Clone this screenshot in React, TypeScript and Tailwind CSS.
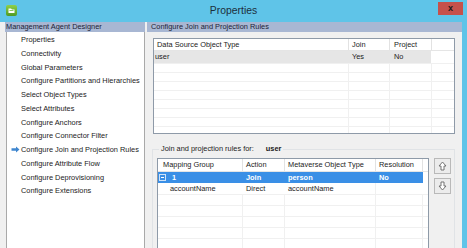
import React from "react";

const LEFT_ITEMS = [
  "Properties",
  "Connectivity",
  "Global Parameters",
  "Configure Partitions and Hierarchies",
  "Select Object Types",
  "Select Attributes",
  "Configure Anchors",
  "Configure Connector Filter",
  "Configure Join and Projection Rules",
  "Configure Attribute Flow",
  "Configure Deprovisioning",
  "Configure Extensions",
];

const ACTIVE = "Configure Join and Projection Rules";

function AppIcon() {
  return (
    <svg width="11" height="11" viewBox="0 0 11 11">
      <defs>
        <linearGradient id="g" x1="0" y1="0" x2="0" y2="1">
          <stop offset="0" stopColor="#8fd04a" />
          <stop offset="1" stopColor="#4f9a22" />
        </linearGradient>
      </defs>
      <rect x="0" y="0" width="11" height="11" rx="2" fill="url(#g)" />
      <path d="M2.5 3.5h2.5l1 1h2.5v3.5h-6z" fill="#fff" />
      <path d="M3.5 5.5h4" stroke="#6fb83a" strokeWidth="0.8" />
    </svg>
  );
}

function Arrow({ down }: { down?: boolean }) {
  return (
    <svg width="9" height="10" viewBox="0 0 9 10" className={down ? "rotate-180" : ""}>
      <path d="M4.5 1 L8 5 H6 V9 H3 V5 H1 Z" fill="#fff" stroke="#666" strokeWidth="0.9" strokeLinejoin="round" />
    </svg>
  );
}

function TopGrid() {
  const emptyRows = Array.from({ length: 8 });
  return (
    <div className="ml-[1px] flex h-[96px] w-[302px] flex-col overflow-hidden border border-[#8e9aa8] bg-white">
      <div className="flex h-[12px] shrink-0 items-center border-b border-[#e5e5e5]">
        <div className="w-[194px] pl-[3px]">Data Source Object Type</div>
        <div className="h-full w-[41px] border-l border-[#e2e2e2] pl-[3px] leading-[11px]">Join</div>
        <div className="h-full w-[42px] border-l border-[#e2e2e2] pl-[4px] leading-[11px]">Project</div>
        <div className="h-full flex-1 border-l border-[#e2e2e2]" />
      </div>
      <div className="flex h-[12px] shrink-0 items-center">
        <div className="flex h-full w-[277px] items-center bg-[#e6e6e6]">
          <div className="w-[194px] pl-[1px]">user</div>
          <div className="w-[41px] pl-[4px]">Yes</div>
          <div className="w-[42px] pl-[5px]">No</div>
        </div>
      </div>
      {emptyRows.map((_, i) => (
        <div key={i} className="flex h-[9px] shrink-0 border-t border-[#f0f0f0]">
          <div className="w-[194px]" />
          <div className="w-[41px] border-l border-[#f0f0f0]" />
          <div className="w-[42px] border-l border-[#f0f0f0]" />
          <div className="flex-1 border-l border-[#f0f0f0]" />
        </div>
      ))}
    </div>
  );
}

function BottomGrid() {
  const emptyRows = Array.from({ length: 7 });
  return (
    <div className="flex h-[115px] w-[272px] flex-col overflow-hidden border border-[#8e9aa8] bg-white">
      <div className="flex h-[13px] shrink-0 items-stretch border-b border-[#e5e5e5] leading-[12px]">
        <div className="w-[84px] pl-[5px]">Mapping Group</div>
        <div className="w-[42px] border-l border-[#e2e2e2] pl-[3px]">Action</div>
        <div className="w-[91px] border-l border-[#e2e2e2] pl-[3px]">Metaverse Object Type</div>
        <div className="w-[48px] border-l border-[#e2e2e2] border-r pl-[3px]">Resolution</div>
        <div className="flex-1" />
      </div>
      <div className="flex h-[11px] shrink-0">
        <div className="flex h-full w-[265px] items-center bg-[#3a8fe6] font-bold text-white">
          <div className="flex w-[84px] items-center pl-[1px]">
            <span className="flex h-[7px] w-[7px] items-center justify-center border border-[#cfe3f8]">
              <span className="h-[1px] w-[3px] bg-white" />
            </span>
            <span className="ml-[6px]">1</span>
          </div>
          <div className="w-[42px] pl-[4px]">Join</div>
          <div className="w-[91px] pl-[4px]">person</div>
          <div className="w-[48px] pl-[4px]">No</div>
        </div>
      </div>
      <div className="flex h-[11px] shrink-0 items-center">
        <div className="w-[84px] pl-[12px]">accountName</div>
        <div className="w-[42px] pl-[4px]">Direct</div>
        <div className="w-[91px] pl-[4px]">accountName</div>
        <div className="h-full w-[48px] border-l border-[#f0f0f0]" />
      </div>
      {emptyRows.map((_, i) => (
        <div key={i} className="flex h-[11px] shrink-0 border-t border-[#f0f0f0]">
          <div className="w-[84px]" />
          <div className="w-[42px] border-l border-[#f0f0f0]" />
          <div className="w-[91px] border-l border-[#f0f0f0]" />
          <div className="w-[48px] border-l border-[#f0f0f0] border-r" />
        </div>
      ))}
    </div>
  );
}

export default function App() {
  return (
    <div className="flex h-[248px] w-[467px] flex-col overflow-hidden bg-[#5fc4e8] font-['Liberation_Sans',Arial,sans-serif] text-[7.4px] leading-none text-[#1b1b1b]">
      {/* title bar */}
      <div className="grid h-[22px] shrink-0 grid-cols-[1fr_auto_1fr] items-start">
        <div className="pl-[6px] pt-[5px]">
          <AppIcon />
        </div>
        <div className="pt-[6px] text-[10.4px] text-[#1c2f3c]">Properties</div>
        <div className="flex justify-end pr-[4px] pt-[2px]">
          <div className="flex h-[13px] w-[25px] items-center justify-center bg-[#c6514b] text-[9px] font-bold text-[#1a1a1a]">
            x
          </div>
        </div>
      </div>

      {/* body */}
      <div className="flex min-h-0 flex-1 pr-[5px]">
        <div className="flex flex-1 bg-[#f0f0f0] pl-[5px]">
          {/* left: steps */}
          <div className="flex w-[140px] flex-col">
            <div className="flex h-[10px] shrink-0 items-center bg-[#a8b7d3] pl-[1px] text-[#1c2236]">
              Management Agent Designer
            </div>
            <div className="ml-[1px] flex-1 border-x border-[#a9a9a9] bg-white pt-[1px]">
              {LEFT_ITEMS.map((item) => (
                <div key={item} className="flex h-[13.75px] items-center">
                  <span className="flex w-[14px] justify-center pl-[2px]">
                    {item === ACTIVE && (
                      <svg width="9" height="7" viewBox="0 0 9 7">
                        <path d="M0.5 2.3h4.5V0.5L8.5 3.5 5 6.5V4.7H0.5z" fill="#3f86cf" />
                      </svg>
                    )}
                  </span>
                  <span>{item}</span>
                </div>
              ))}
            </div>
          </div>

          {/* right: join rules */}
          <div className="ml-[2px] flex min-h-0 flex-1 flex-col overflow-hidden">
            <div className="flex h-[10px] shrink-0 items-center bg-[#a8b7d3] pl-[4px] text-[#1c2236]">
              Configure Join and Projection Rules
            </div>
            <div className="flex-1 pl-[5px] pt-[6px]">
              <TopGrid />
              <fieldset className="mt-[11px] h-[140px] w-[303px] border border-[#e0e3e6] pl-[4px]">
                <legend className="ml-[2px] h-[8px] px-[2px] leading-[8px]">
                  Join and projection rules for:
                  <span className="ml-[12px] font-bold">user</span>
                </legend>
                <div className="flex pt-[5px]">
                  <BottomGrid />
                  <div className="ml-[5px] flex flex-col gap-[4px]">
                    <button className="flex h-[16px] w-[17px] items-center justify-center border border-[#b9b9b9] bg-[#ececec]">
                      <Arrow />
                    </button>
                    <button className="flex h-[16px] w-[17px] items-center justify-center border border-[#b9b9b9] bg-[#ececec]">
                      <Arrow down />
                    </button>
                  </div>
                </div>
              </fieldset>
            </div>
          </div>
        </div>
      </div>
    </div>
  );
}
